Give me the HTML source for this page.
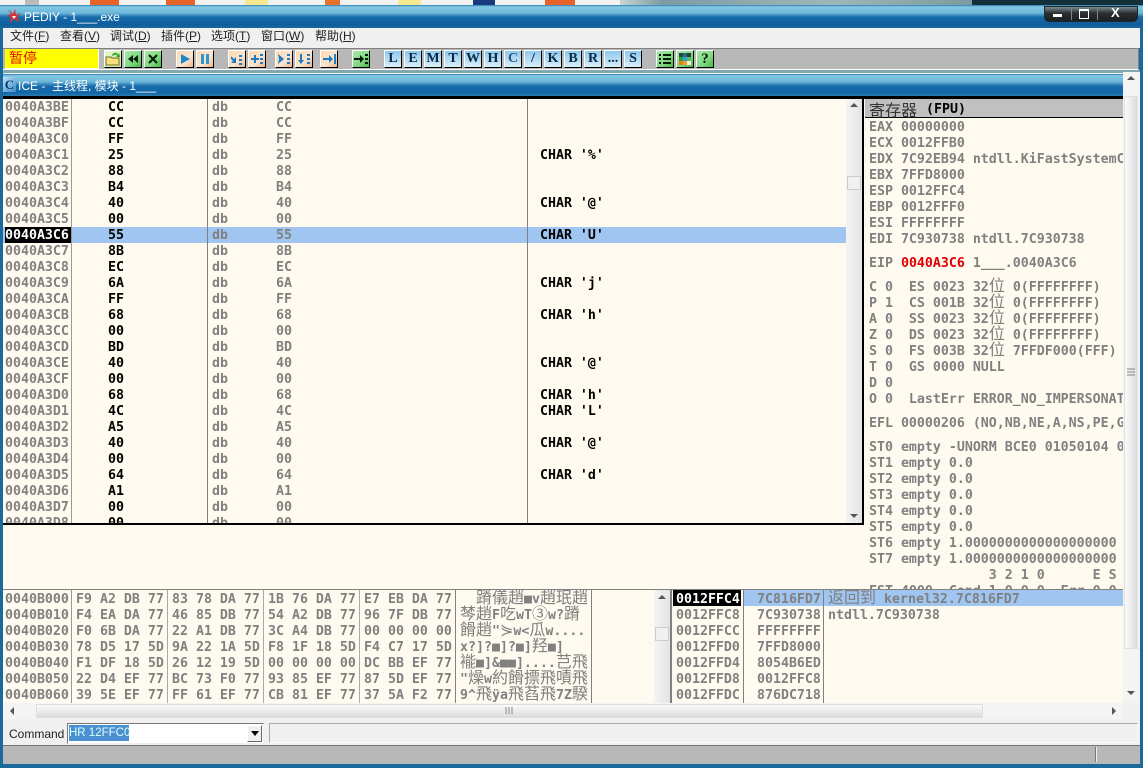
<!DOCTYPE html>
<html><head><meta charset="utf-8"><style>
html,body{margin:0;padding:0;width:1143px;height:768px;overflow:hidden;background:#fff}
div,pre,svg{position:absolute;margin:0}
pre{font:bold 13.28px/16px "DejaVu Sans Mono","Liberation Mono",monospace;color:#808080;letter-spacing:0;white-space:pre}
pre i{font:normal 16px/0 "Noto Sans CJK SC","WenQuanYi Zen Hei",sans-serif;display:inline-block;height:0;vertical-align:baseline}
.cjk{font:normal 16px/16px "Noto Sans CJK SC","WenQuanYi Zen Hei",sans-serif}
.b{width:16px;height:16px;top:50px;border:1px solid #fff;border-right:1px solid #000;border-bottom:1px solid #000;overflow:hidden}
.o{background:linear-gradient(135deg,#ffd9b0,#f7e4d0 60%,#f2b582)}
.g{background:linear-gradient(135deg,#a8e8a8,#7fd87f 60%,#46b846)}
.l{background:linear-gradient(#8fc8ee,#d8effa);color:#0a2a44;font:bold 14px/16px "Liberation Serif",serif;text-align:center}
.v{width:1px;background:#808080}
.sb{background:linear-gradient(90deg,#f4f4f4,#e4e4e4)}
.ui{font:12px/16px "Liberation Sans","Noto Sans CJK SC",sans-serif;color:#222;white-space:pre}
</style></head><body>

<!-- wallpaper strip -->
<div style="left:0;top:0;width:1143px;height:6px;background:#f2f2f0"></div>
<div style="left:25px;top:0;width:14px;height:5px;background:#bbb"></div>
<div style="left:90px;top:0;width:29px;height:5px;background:#e8622a"></div>
<div style="left:166px;top:0;width:29px;height:5px;background:#e8622a"></div>
<div style="left:245px;top:0;width:23px;height:5px;background:#f8e890"></div>
<div style="left:325px;top:0;width:15px;height:5px;background:#e8702a"></div>
<div style="left:398px;top:0;width:23px;height:5px;background:#f8e890"></div>
<div style="left:473px;top:0;width:22px;height:5px;background:#1a3a80"></div>
<div style="left:545px;top:0;width:30px;height:5px;background:#e8622a"></div>
<div style="left:620px;top:0;width:352px;height:5px;background:linear-gradient(90deg,#c8d4d4,#7c9ca4 12%,#9fb6b8 60%,#7c9ca0)"></div>
<div style="left:972px;top:0;width:171px;height:5px;background:#14303a"></div>

<!-- window frame -->
<div style="left:0;top:5px;width:1143px;height:763px;background:#1b6a9c"></div>
<div style="left:0;top:5px;width:1143px;height:23px;background:linear-gradient(#2a7cad 0,#84c8e4 8%,#6cb6d8 35%,#176cac 52%,#0f5c9c 85%,#1a6a9c 100%)"></div>
<svg style="left:6px;top:8px" width="16" height="16" viewBox="0 0 16 16"><path d="M2 1 L7 6 L9 1 L10 7 L15 5 L11 9 L14 14 L8 11 L4 15 L5 9 L1 8 L5 6Z" fill="#d83030"/><path d="M6 8 L10 8 L8 11Z" fill="#fff"/></svg>
<div class="ui" style="left:24px;top:9px;color:#fff;font-size:12px">PEDIY - 1___.exe</div>

<!-- caption buttons -->
<div style="left:1044px;top:6px;width:92px;height:14px;background:linear-gradient(#7a8a90,#2a2e30 45%,#1c2022);border:1px solid #1a2a30;border-radius:0 0 5px 5px"></div>
<div style="left:1071px;top:7px;width:1px;height:13px;background:#788"></div>
<div style="left:1097px;top:7px;width:1px;height:13px;background:#788"></div>
<div style="left:1053px;top:14px;width:9px;height:3px;background:#fff"></div>
<div style="left:1079px;top:9px;width:8px;height:7px;border:1px solid #fff;border-top:2px solid #fff"></div>
<div class="ui" style="left:1111px;top:5px;color:#fff;font:bold 13px/16px 'Liberation Sans',sans-serif">X</div>

<!-- menu -->
<div style="left:3px;top:28px;width:1137px;height:20px;background:#f0f0f0"></div>
<div class="ui" style="left:10px;top:28px">文件(<u>F</u>)</div>
<div class="ui" style="left:60px;top:28px">查看(<u>V</u>)</div>
<div class="ui" style="left:110px;top:28px">调试(<u>D</u>)</div>
<div class="ui" style="left:161px;top:28px">插件(<u>P</u>)</div>
<div class="ui" style="left:211px;top:28px">选项(<u>T</u>)</div>
<div class="ui" style="left:261px;top:28px">窗口(<u>W</u>)</div>
<div class="ui" style="left:315px;top:28px">帮助(<u>H</u>)</div>

<!-- toolbar -->
<div style="left:3px;top:48px;width:1135px;height:20px;background:#b8b8b8;border-top:1px solid #808080;border-bottom:1px solid #fff;border-right:1px solid #808080"></div>
<div style="left:3px;top:70px;width:1137px;height:3px;background:#7fa8b0"></div>
<div style="left:5px;top:49px;width:93px;height:19px;background:#ffff00;border:1px solid #fff;border-width:0 1px 1px 0"></div>
<div class="cjk" style="left:9px;top:50px;color:#e01010;font-size:14px;white-space:pre">暂停</div>

<div class="b g" style="left:104px;background:linear-gradient(135deg,#e8f8d0,#c8e8a0)"><svg style="left:0;top:0" width="16" height="16" viewBox="0 0 16 16"><path d="M1 6h5l1 1h7v7H1Z" fill="#f8e080" stroke="#707020"/><path d="M7 4 C9 1 12 1 13 4 L14 2 L15 6 L11 6 L12.5 5 C11 3 9.500 3 8 5Z" fill="#20a020"/></svg></div>
<div class="b g" style="left:124px"><svg style="left:0;top:0" width="16" height="16" viewBox="0 0 16 16"><path d="M8 4v8L3 8ZM13 4v8L8 8Z" fill="#0a200a"/></svg></div>
<div class="b g" style="left:144px"><svg style="left:0;top:0" width="16" height="16" viewBox="0 0 16 16"><path d="M4 4l8 8M12 4l-8 8" stroke="#0a200a" stroke-width="2.200"/></svg></div>

<div class="b o" style="left:176px"><svg style="left:0;top:0" width="16" height="16" viewBox="0 0 16 16"><path d="M4 3v10l9-5Z" fill="#1f88c8"/></svg></div>
<div class="b o" style="left:196px"><svg style="left:0;top:0" width="16" height="16" viewBox="0 0 16 16"><path d="M4 3h3v10H4ZM9 3h3v10H9Z" fill="#2f98d0"/></svg></div>
<div class="b o" style="left:228px"><svg style="left:0;top:0" width="16" height="16" viewBox="0 0 16 16"><path d="M2 5l3 3 2-2v6H2l2-2-2-2ZM10 4h3v2h-3ZM10 8h3v2h-3ZM10 12h3v2h-3Z" fill="#1f7cc0"/></svg></div>
<div class="b o" style="left:248px"><svg style="left:0;top:0" width="16" height="16" viewBox="0 0 16 16"><path d="M5 4h2v3h3v2H7v3H5V9H2V7h3ZM11 3h3v2h-3ZM11 7h3v2h-3ZM11 11h3v2h-3Z" fill="#1f7cc0"/></svg></div>
<div class="b o" style="left:275px"><svg style="left:0;top:0" width="16" height="16" viewBox="0 0 16 16"><path d="M2 3l6 5-6 5 1-5ZM11 3h3v2h-3ZM11 7h3v2h-3ZM11 11h3v2h-3Z" fill="#1f7cc0"/></svg></div>
<div class="b o" style="left:295px"><svg style="left:0;top:0" width="16" height="16" viewBox="0 0 16 16"><path d="M4 3h2v6h2l-3 4-3-4h2ZM11 3h3v2h-3ZM11 7h3v2h-3ZM11 11h3v2h-3Z" fill="#1f7cc0"/></svg></div>
<div class="b o" style="left:320px"><svg style="left:0;top:0" width="16" height="16" viewBox="0 0 16 16"><path d="M2 7h6V4l4 4-4 4V9H2ZM13 3h2v10h-2Z" fill="#1f7cc0"/></svg></div>
<div class="b g" style="left:352px"><svg style="left:0;top:0" width="16" height="16" viewBox="0 0 16 16"><path d="M1 7h6V4l4 4-4 4V9H1ZM12 3h3v2h-3ZM12 7h3v2h-3ZM12 11h3v2h-3Z" fill="#061806"/></svg></div>

<div class="b l" style="left:384px">L</div>
<div class="b l" style="left:404px">E</div>
<div class="b l" style="left:424px">M</div>
<div class="b l" style="left:444px">T</div>
<div class="b l" style="left:464px">W</div>
<div class="b l" style="left:484px">H</div>
<div class="b l" style="left:504px;color:#2a5a80">C</div>
<div class="b l" style="left:524px">/</div>
<div class="b l" style="left:544px">K</div>
<div class="b l" style="left:564px">B</div>
<div class="b l" style="left:584px">R</div>
<div class="b l" style="left:604px">...</div>
<div class="b l" style="left:624px">S</div>

<div class="b g" style="left:656px"><svg style="left:0;top:0" width="16" height="16" viewBox="0 0 16 16"><path d="M2 3h2v2H2ZM6 3h8v2H6ZM2 7h2v2H2ZM6 7h8v2H6ZM2 11h2v2H2ZM6 11h8v2H6Z" fill="#061806"/></svg></div>
<div class="b g" style="left:676px"><svg style="left:0;top:0" width="16" height="16" viewBox="0 0 16 16"><path d="M2 2h4v4H2Z" fill="#1a4a40"/><path d="M6 2h4v4H6Z" fill="#2a6a80"/><path d="M10 2h4v4h-4Z" fill="#204040"/><path d="M2 6h4v4H2Z" fill="#3aa030"/><path d="M6 6h4v4H6Z" fill="#30a0d8"/><path d="M10 6h4v4h-4Z" fill="#50c050"/><path d="M2 10h4v4H2Z" fill="#e08020"/><path d="M6 10h4v4H6Z" fill="#e8a030"/><path d="M10 10h4v4h-4Z" fill="#f4f4e0"/></svg></div>
<div class="b g" style="left:696px;color:#061806;font:bold 15px/16px 'Liberation Serif',serif;text-align:center">?</div>

<!-- MDI body background -->
<div style="left:3px;top:73px;width:1137px;height:691px;background:#f0f0f0"></div>

<!-- MDI title -->
<div style="left:3px;top:74px;width:1120px;height:22px;background:linear-gradient(#2a7cad 0,#84c8e4 8%,#6cb6d8 35%,#176cac 55%,#1166a8 85%,#2a7cb0 100%)"></div>
<div style="left:3px;top:77px;width:13px;height:15px;background:linear-gradient(135deg,#bfe4f8,#3c8cc8);font:bold 13px/15px 'Liberation Serif',serif;color:#0d3d70;text-align:center">C</div>
<div class="ui" style="left:18px;top:78px;color:#fff">ICE -  主线程, 模块 - 1___</div>
<div style="left:3px;top:96px;width:1120px;height:3px;background:#000"></div>

<!-- outer scrollbar -->
<div class="sb" style="left:1123px;top:72px;width:17px;height:631px;background:#f4f4f4"></div>
<div class="sb" style="left:1124px;top:96px;width:14px;height:553px;background:linear-gradient(90deg,#fafafa,#dcdcdc);border:1px solid #e0e0e0;box-sizing:border-box"></div>
<svg style="left:1126px;top:74px" width="10" height="8"><path d="M5 2L1 6h8Z" fill="#555"/></svg>
<svg style="left:1126px;top:689px" width="10" height="8"><path d="M5 6L1 2h8Z" fill="#555"/></svg>
<svg style="left:1126px;top:368px" width="10" height="10"><path d="M1 1h8M1 4h8M1 7h8" stroke="#888"/></svg>

<!-- disassembly pane -->
<div style="left:3px;top:99px;width:859px;height:424px;background:#fffaf0;overflow:hidden">
<div style="left:0;top:128px;width:843px;height:16px;background:#9fc5f0"></div>
<div style="left:2px;top:128px;width:66px;height:16px;background:#000"></div>
<div class="v" style="left:68px;top:0;height:424px;background:#999"></div>
<div class="v" style="left:204px;top:0;height:424px"></div>
<div class="v" style="left:524px;top:0;height:424px"></div>
<pre style="left:2px;top:1px">0040A3BE
0040A3BF
0040A3C0
0040A3C1
0040A3C2
0040A3C3
0040A3C4
0040A3C5
<span style="color:#fff">0040A3C6</span>
0040A3C7
0040A3C8
0040A3C9
0040A3CA
0040A3CB
0040A3CC
0040A3CD
0040A3CE
0040A3CF
0040A3D0
0040A3D1
0040A3D2
0040A3D3
0040A3D4
0040A3D5
0040A3D6
0040A3D7
0040A3D8</pre>
<pre style="left:105px;top:1px;color:#000">CC
CC
FF
25
88
B4
40
00
55
8B
EC
6A
FF
68
00
BD
40
00
68
4C
A5
40
00
64
A1
00
00</pre>
<pre style="left:209px;top:1px">db
db
db
db
db
db
db
db
db
db
db
db
db
db
db
db
db
db
db
db
db
db
db
db
db
db
db</pre>
<pre style="left:273px;top:1px">CC
CC
FF
25
88
B4
40
00
55
8B
EC
6A
FF
68
00
BD
40
00
68
4C
A5
40
00
64
A1
00
00</pre>
<pre style="left:537px;top:49px;color:#000">CHAR '%'


CHAR '@'

CHAR 'U'


CHAR 'j'

CHAR 'h'


CHAR '@'

CHAR 'h'
CHAR 'L'

CHAR '@'

CHAR 'd'</pre>
<div class="sb" style="left:843px;top:0;width:16px;height:424px"></div>
<svg style="left:846px;top:2px" width="10" height="8"><path d="M5 2L1 6h8Z" fill="#555"/></svg>
<svg style="left:846px;top:413px" width="10" height="8"><path d="M5 6L1 2h8Z" fill="#555"/></svg>
<div style="left:844px;top:77px;width:14px;height:14px;background:#f0f0f0;border:1px solid #ccc;box-sizing:border-box"></div>
</div>
<div style="left:3px;top:523px;width:861px;height:2px;background:#000"></div>
<div style="left:862px;top:96px;width:2px;height:429px;background:#000"></div>

<!-- info pane -->
<div style="left:3px;top:525px;width:861px;height:64px;background:#fffaf0"></div>
<div style="left:864px;top:525px;width:2px;height:64px;background:#808080"></div>

<!-- registers pane -->
<div style="left:864px;top:99px;width:259px;height:490px;background:#fffaf0;overflow:hidden">
<div style="left:1px;top:0;width:258px;height:18px;background:#c0c0c0;border-bottom:1px solid #000"></div>
<div class="cjk" style="left:5px;top:2px;color:#333">寄存器</div>
<pre style="left:62px;top:3px;color:#000">(FPU)</pre>
<pre style="left:5px;top:21px">EAX 00000000
ECX 0012FFB0
EDX 7C92EB94 ntdll.KiFastSystemC
EBX 7FFD8000
ESP 0012FFC4
EBP 0012FFF0
ESI FFFFFFFF
EDI 7C930738 ntdll.7C930738</pre>
<pre style="left:5px;top:157px">EIP <span style="color:#e00000">0040A3C6</span> 1___.0040A3C6</pre>
<pre style="left:5px;top:181px">C 0  ES 0023 32<i>位</i> 0(FFFFFFFF)
P 1  CS 001B 32<i>位</i> 0(FFFFFFFF)
A 0  SS 0023 32<i>位</i> 0(FFFFFFFF)
Z 0  DS 0023 32<i>位</i> 0(FFFFFFFF)
S 0  FS 003B 32<i>位</i> 7FFDF000(FFF)
T 0  GS 0000 NULL
D 0
O 0  LastErr ERROR_NO_IMPERSONAT</pre>
<pre style="left:5px;top:317px">EFL 00000206 (NO,NB,NE,A,NS,PE,G</pre>
<pre style="left:5px;top:341px">ST0 empty -UNORM BCE0 01050104 0
ST1 empty 0.0
ST2 empty 0.0
ST3 empty 0.0
ST4 empty 0.0
ST5 empty 0.0
ST6 empty 1.0000000000000000000
ST7 empty 1.0000000000000000000
               3 2 1 0      E S
FST 4000  Cond 1 0 0 0  Err 0 0</pre>
</div>

<!-- dump pane -->
<div style="left:3px;top:589px;width:667px;height:114px;background:#fffaf0;border-top:1px solid #808080;box-sizing:border-box;overflow:hidden">
<div class="v" style="left:68px;top:0;height:113px;background:#999"></div>
<div class="v" style="left:164px;top:0;height:113px;background:#aaa"></div>
<div class="v" style="left:260px;top:0;height:113px;background:#aaa"></div>
<div class="v" style="left:356px;top:0;height:113px;background:#aaa"></div>
<div class="v" style="left:452px;top:0;height:113px"></div>
<div class="v" style="left:588px;top:0;height:113px"></div>
<pre style="left:2px;top:2px">0040B000
0040B010
0040B020
0040B030
0040B040
0040B050
0040B060</pre>
<pre style="left:73px;top:2px">F9 A2 DB 77
F4 EA DA 77
F0 6B DA 77
78 D5 17 5D
F1 DF 18 5D
22 D4 EF 77
39 5E EF 77</pre>
<pre style="left:169px;top:2px">83 78 DA 77
46 85 DB 77
22 A1 DB 77
9A 22 1A 5D
26 12 19 5D
BC 73 F0 77
FF 61 EF 77</pre>
<pre style="left:265px;top:2px">1B 76 DA 77
54 A2 DB 77
3C A4 DB 77
F8 1F 18 5D
00 00 00 00
93 85 EF 77
CB 81 EF 77</pre>
<pre style="left:361px;top:2px">E7 EB DA 77
96 7F DB 77
00 00 00 00
F4 C7 17 5D
DC BB EF 77
87 5D EF 77
37 5A F2 77</pre>
<pre style="left:457px;top:2px">  <i>蹐儀趙</i>■v<i>趙珉趙</i>
<i>棽趙</i>F<i>吃</i>wT<i>③</i>w?<i>蹐</i>
<i>餶趙</i>"<i>⋟</i>w&lt;<i>瓜</i>w....
x?]?■]?■]<i>羟</i>■]
<i>褦</i>■]&amp;■■]....<i>芑飛</i>
"<i>燥</i>w<i>約餶摽飛嘖飛</i>
9^<i>飛</i>ÿa<i>飛萏飛</i>7Z<i>騤</i></pre>
<div class="sb" style="left:651px;top:0;width:16px;height:113px"></div>
<svg style="left:654px;top:3px" width="10" height="8"><path d="M5 2L1 6h8Z" fill="#555"/></svg>
<div style="left:652px;top:37px;width:14px;height:14px;background:#f0f0f0;border:1px solid #ccc;box-sizing:border-box"></div>
</div>
<div style="left:670px;top:589px;width:2px;height:114px;background:#808080"></div>

<!-- stack pane -->
<div style="left:672px;top:589px;width:451px;height:114px;background:#fffaf0;border-top:1px solid #808080;box-sizing:border-box;overflow:hidden">
<div style="left:71px;top:0;width:380px;height:16px;background:#9fc5f0"></div>
<div style="left:1px;top:0;width:68px;height:16px;background:#000"></div>
<div class="v" style="left:71px;top:0;height:113px"></div>
<div class="v" style="left:151px;top:0;height:113px"></div>
<pre style="left:4px;top:2px"><span style="color:#fff">0012FFC4</span>
0012FFC8
0012FFCC
0012FFD0
0012FFD4
0012FFD8
0012FFDC</pre>
<pre style="left:85px;top:2px">7C816FD7
7C930738
FFFFFFFF
7FFD8000
8054B6ED
0012FFC8
876DC718</pre>
<pre style="left:156px;top:2px"><i>返回到</i> kernel32.7C816FD7
ntdll.7C930738</pre>
</div>

<!-- horizontal scrollbar -->
<div style="left:3px;top:703px;width:1120px;height:16px;background:#f4f4f4"></div>
<div style="left:36px;top:704px;width:947px;height:14px;background:linear-gradient(#fafafa,#dcdcdc);border:1px solid #ddd;box-sizing:border-box"></div>
<svg style="left:8px;top:706px" width="8" height="10"><path d="M2 5L6 1v8Z" fill="#555"/></svg>
<svg style="left:1110px;top:706px" width="8" height="10"><path d="M6 5L2 1v8Z" fill="#555"/></svg>
<svg style="left:504px;top:706px" width="10" height="10"><path d="M2 1v7M5 1v7M8 1v7" stroke="#888"/></svg>

<!-- command bar -->
<div style="left:3px;top:719px;width:1137px;height:26px;background:#f0f0f0"></div>
<div class="ui" style="left:9px;top:726px">Command</div>
<div style="left:67px;top:723px;width:197px;height:21px;background:#fff;border:1px solid #777;border-color:#777 #eee #eee #777;box-sizing:border-box"></div>
<div class="ui" style="left:69px;top:725px;width:60px;height:16px;background:#4a90d0;color:#dff;font-size:11.5px">HR 12FFC0</div>
<div style="left:247px;top:725px;width:15px;height:17px;background:#f0f0f0;border:1px solid #999;border-color:#fff #666 #666 #fff;box-sizing:border-box"></div>
<svg style="left:250px;top:730px" width="10" height="7"><path d="M1 1h8L5 6Z" fill="#000"/></svg>
<div style="left:269px;top:723px;width:869px;height:20px;border:1px solid #ccc;border-color:#aaa #f8f8f8 #f8f8f8 #aaa;box-sizing:border-box"></div>

<!-- status bar -->
<div style="left:3px;top:745px;width:1137px;height:19px;background:#b8b8b8;border-top:1px solid #777;box-sizing:border-box"></div>
<div style="left:1095px;top:747px;width:1px;height:15px;background:#777"></div>
<div style="left:1096px;top:747px;width:1px;height:15px;background:#eee"></div>
</body></html>
